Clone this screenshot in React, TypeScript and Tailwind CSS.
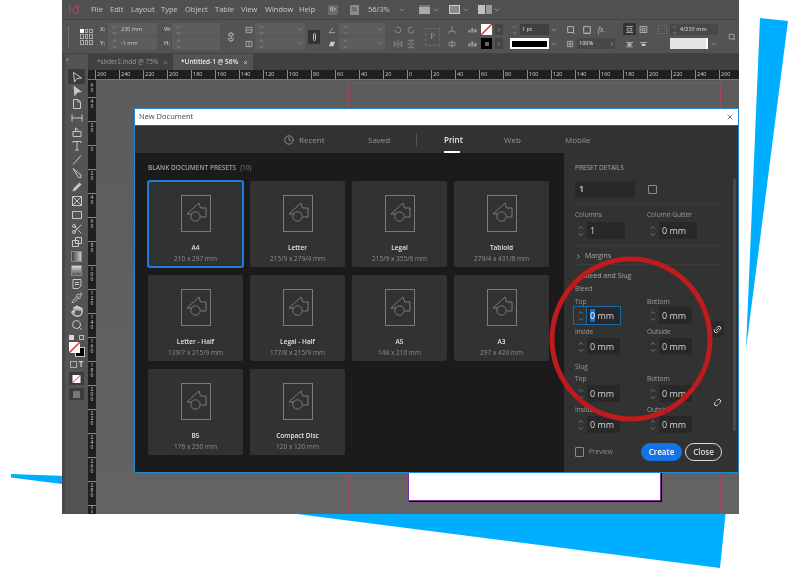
import React from 'react';
import { ChevronDown, ChevronRight, ChevronUp, Clock, Hand, Link2, Pipette, Scissors, Search, Unlink2, X } from 'lucide-react';

const Ico: React.FC<{ d: string; className?: string; fill?: boolean }> = ({ d, className = 'w-[12px] h-[12px]', fill }) => (
  <svg viewBox="0 0 24 24" className={`${className} shrink-0 text-[#c8c8c8]`} fill={fill ? 'currentColor' : 'none'} stroke="currentColor" strokeWidth={fill ? 0 : 2}>
    <path d={d} />
  </svg>
);

const NoneSwatch: React.FC<{ className: string }> = ({ className }) => (
  <svg viewBox="0 0 20 20" className={`${className} shrink-0`}>
    <rect width="20" height="20" fill="#fff" />
    <path d="M0 20L20 0" stroke="#e5283a" strokeWidth="2.5" />
  </svg>
);

const tools: React.ReactNode[] = [
  <Ico d="M5 3L21 14L12 15L7 22Z" />,
  <Ico fill d="M5 1L22 14L13 15L7 23Z" />,
  <Ico d="M5 3h9l5 5v13H5zM14 3v5h5" />,
  <Ico d="M2 5v14M22 5v14M2 12h20" />,
  <Ico d="M4 11h16v10H4zM9 11V4l6 4" />,
  <Ico d="M4 6V3h16v3M12 3v16M8 20h8" />,
  <Ico d="M4 21L20 3" />,
  <Ico d="M4 3l16 13v5h-5L4 3z" />,
  <Ico fill d="M3 21l2-6L17 3l4 4L9 19z" />,
  <Ico d="M3 3h18v18H3zM3 3l18 18M21 3L3 21" />,
  <Ico d="M3 5h18v14H3z" />,
  <Scissors className="w-[12px] h-[12px] text-[#c8c8c8]" strokeWidth={2} />,
  <Ico d="M9 3h12v12H9zM3 9h12v12H3z" />,
  <div className="w-[11px] h-[11px] bg-gradient-to-r from-[#444] to-[#ccc] border border-[#888]" />,
  <div className="w-[11px] h-[11px] bg-gradient-to-b from-[#ddd] to-[#555] border border-[#888]" />,
  <Ico d="M4 3h16v13l-5 5H4zM8 9h8M8 13h8" />,
  <Pipette className="w-[12px] h-[12px] text-[#c8c8c8]" strokeWidth={2} />,
  <Hand className="w-[12px] h-[12px] text-[#ddd]" strokeWidth={2.5} />,
  <Search className="w-[12px] h-[12px] text-[#c8c8c8]" strokeWidth={2} />,
];

const menu = [
  { label: 'File', cls: 'w-[19px]' },
  { label: 'Edit', cls: 'w-[21px]' },
  { label: 'Layout', cls: 'w-[30px]' },
  { label: 'Type', cls: 'w-[24px]' },
  { label: 'Object', cls: 'w-[30px]' },
  { label: 'Table', cls: 'w-[26px]' },
  { label: 'View', cls: 'w-[24px]' },
  { label: 'Window', cls: 'w-[34px]' },
  { label: 'Help', cls: 'w-[29px]' },
];

const hRuler = [260, 240, 220, 200, 180, 160, 140, 120, 100, 80, 60, 40, 20, 0, 20, 40, 60, 80, 100, 120, 140, 160, 180, 200, 220, 240, 260];
const vRuler = [40, 20, 0, 20, 40, 60, 80, 100, 120, 140, 160, 180, 200, 220, 240, 260, 280];

const presets = [
  { name: 'A4', size: '210 x 297 mm', active: true },
  { name: 'Letter', size: '215/9 x 279/4 mm' },
  { name: 'Legal', size: '215/9 x 355/6 mm' },
  { name: 'Tabloid', size: '279/4 x 431/8 mm' },
  { name: 'Letter - Half', size: '139/7 x 215/9 mm' },
  { name: 'Legal - Half', size: '177/8 x 215/9 mm' },
  { name: 'A5', size: '148 x 210 mm' },
  { name: 'A3', size: '297 x 420 mm' },
  { name: 'B5', size: '176 x 250 mm' },
  { name: 'Compact Disc', size: '120 x 120 mm' },
];

const Spin: React.FC = () => (
  <div className="w-[7px] flex flex-col items-center shrink-0 text-[#a8a8a8]">
    <ChevronUp className="w-[7px] h-[6px]" strokeWidth={2} />
    <ChevronDown className="w-[7px] h-[6px]" strokeWidth={2} />
  </div>
);

const CtlField: React.FC<{ text?: string; chevron?: boolean; className?: string }> = ({ text, chevron, className = '' }) => (
  <div className={`h-[13px] flex items-center bg-[#5d5d5d] pl-[3px] pr-[2px] gap-[3px] text-[5.5px] text-[#cfcfcf] ${className}`}>
    <Spin />
    <span className="flex-1 whitespace-nowrap">{text}</span>
    {chevron && <ChevronDown className="w-[7px] h-[7px] text-[#999]" strokeWidth={2.5} />}
  </div>
);

const Label: React.FC<{ children: React.ReactNode; className?: string }> = ({ children, className = '' }) => (
  <div className={`h-[8px] leading-[8px] text-[6.5px] text-[#9c9c9c] whitespace-nowrap ${className}`}>{children}</div>
);

const Stepper: React.FC<{ value: string; wide?: boolean; focused?: boolean }> = ({ value, wide, focused }) => (
  <div className={`flex items-center h-[17px] w-fit -ml-px pl-px ${focused ? 'outline outline-1 outline-[#1b6aa8]' : ''}`}>
    <div className={`w-[12px] flex flex-col items-center text-[#b4b4b4] ${focused ? 'border-r border-[#1b6aa8] h-full justify-center' : ''}`}>
      <ChevronUp className="w-[8px] h-[7px]" strokeWidth={1.75} />
      <ChevronDown className="w-[8px] h-[7px]" strokeWidth={1.75} />
    </div>
    <div className={`${wide ? 'w-[38px]' : 'w-[33px]'} h-full bg-[#282828] pl-[3px] flex items-center text-[9px] font-medium text-[#d4d4d4]`}>
      {focused ? (
        <span>
          <span className="bg-[#1d6fc0] text-white">0</span> mm
        </span>
      ) : (
        value
      )}
    </div>
  </div>
);

const Rule: React.FC<{ className: string }> = ({ className }) => <div className={`h-px bg-[#3c3c3c] w-[148px] ${className}`} />;

const FieldPair: React.FC<{ a: string; b: string; className?: string }> = ({ a, b, className = '' }) => (
  <div className={`flex ${className}`}>
    <Label className="w-[72px]">{a}</Label>
    <Label>{b}</Label>
  </div>
);

const PresetIcon: React.FC = () => (
  <svg viewBox="0 0 30 37" className="w-[30px] h-[37px]" fill="none" stroke="#7b7b7b" strokeWidth="1">
    <rect x="0.5" y="0.5" width="29" height="36" />
    <path d="M11 19H6L18 8l1.5 5H25v9h-5" />
    <circle cx="14.5" cy="21.5" r="4.7" />
  </svg>
);

const App: React.FC = () => {
  return (
    <div className="relative w-[800px] h-[572px] bg-white overflow-hidden" style={{ fontFamily: '"Open Sans", "Noto Sans", sans-serif' }}>
      <svg viewBox="0 0 800 572" className="absolute inset-0 w-[800px] h-[572px]">
        <path d="M760 18L788 21L746 349Z" fill="#00aeff" />
        <path d="M11 474L727 500L720 568L11 477.5Z" fill="#00aeff" />
      </svg>

      <div className="relative ml-[62px] w-[677px] h-[514px] bg-[#535353] flex flex-col overflow-hidden blur-[0.3px]">
        {/* menu bar */}
        <div className="h-[20px] shrink-0 flex items-center bg-[#505050] text-[7.5px] text-[#c8c8c8] border-b border-[#444]">
          <span className="ml-[6px] w-[23px] text-[13px] text-[#c23c72]">Id</span>
          {menu.map((m) => (
            <span key={m.label} className={m.cls}>{m.label}</span>
          ))}
          <span className="w-[10px] h-[10px] bg-[#6a6a6a] text-[5.5px] text-[#ccc] flex items-center justify-center">Br</span>
          <span className="ml-[12px] w-[9px] h-[10px] bg-[#8a8a8a] text-[5.5px] text-[#333] flex items-center justify-center">St</span>
          <span className="ml-[9px] w-[30px]">56/3%</span>
          <ChevronDown className="w-[8px] h-[8px] text-[#aaa]" strokeWidth={2} />
          <div className="ml-[13px] w-[11px] h-[9px] bg-[#aaa] border-t-2 border-[#777]" />
          <ChevronDown className="ml-[2px] w-[8px] h-[8px] text-[#aaa]" strokeWidth={2} />
          <div className="ml-[9px] w-[11px] h-[9px] bg-[#888] border border-[#ccc]" />
          <ChevronDown className="ml-[2px] w-[8px] h-[8px] text-[#aaa]" strokeWidth={2} />
          <div className="ml-[8px] w-[14px] h-[9px] flex gap-px">
            <div className="flex-1 bg-[#c0c0c0]" />
            <div className="flex-1 bg-[#999]" />
          </div>
          <ChevronDown className="ml-[1px] w-[8px] h-[8px] text-[#aaa]" strokeWidth={2} />
        </div>

        {/* control panel */}
        <div className="h-[34px] shrink-0 flex items-center bg-[#535353] border-b border-[#444] text-[6px] font-semibold text-[#c4c4c4]">
          <div className="ml-[6px] w-[2px] h-[20px] border-l border-dotted border-[#888]" />
          <div className="ml-[10px] w-[13px] h-[16px] grid grid-cols-3 gap-px">
            {Array.from({ length: 9 }).map((_, i) => (
              <div key={i} className={i === 0 ? 'bg-white' : 'border border-[#aaa]'} />
            ))}
          </div>
          <div className="ml-[7px] w-[57px] flex flex-col gap-px">
            <div className="flex items-center"><span className="w-[8px]">X:</span><CtlField text="230 mm" className="flex-1 font-normal" /></div>
            <div className="flex items-center"><span className="w-[8px]">Y:</span><CtlField text="-1 mm" className="flex-1 font-normal" /></div>
          </div>
          <div className="ml-[7px] w-[56px] flex flex-col gap-px">
            <div className="flex items-center"><span className="w-[8px]">W:</span><CtlField className="flex-1" /></div>
            <div className="flex items-center"><span className="w-[8px]">H:</span><CtlField className="flex-1" /></div>
          </div>
          <Link2 className="ml-[6px] w-[10px] h-[10px] text-[#ddd] rotate-90" strokeWidth={2} />
          <div className="ml-[9px] w-[60px] flex flex-col gap-px">
            <div className="flex items-center gap-[2px]"><Ico d="M3 4h18v16H3zM3 12h18" className="w-[8px] h-[8px]" /><CtlField chevron className="flex-1" /></div>
            <div className="flex items-center gap-[2px]"><Ico d="M3 4h18v16H3zM12 4v16" className="w-[8px] h-[8px]" /><CtlField chevron className="flex-1" /></div>
          </div>
          <div className="ml-[3px] w-[12px] h-[14px] bg-[#333] flex items-center justify-center">
            <div className="w-[3px] h-[8px] rounded-full border border-[#ccc]" />
          </div>
          <div className="ml-[7px] w-[58px] flex flex-col gap-px">
            <div className="flex items-center gap-[2px]"><Ico d="M3 20L15 6M3 20h18" className="w-[10px] h-[8px]" /><CtlField chevron className="flex-1" /></div>
            <div className="flex items-center gap-[2px]"><Ico fill d="M8 5h13l-5 14H3z" className="w-[10px] h-[8px]" /><CtlField chevron className="flex-1" /></div>
          </div>
          <div className="ml-[8px] w-[25px] grid grid-cols-2 gap-y-[4px] opacity-50">
            <Ico d="M5 12a7 7 0 1 0 7-7H9" className="w-[10px] h-[10px]" />
            <Ico d="M19 12a7 7 0 1 1-7-7h3" className="w-[10px] h-[10px]" />
            <Ico d="M12 3v18M3 6l6 6-6 6zM21 6l-6 6 6 6z" className="w-[10px] h-[10px]" />
            <Ico d="M3 12h18M6 3l6 6 6-6zM6 21l6-6 6 6z" className="w-[10px] h-[10px]" />
          </div>
          <div className="ml-[7px] w-[15px] h-[18px] flex items-center justify-center text-[9px] font-normal text-[#8f8f8f] border border-dashed border-[#6a6a6a]" style={{ fontFamily: '"Liberation Serif", serif' }}>P</div>
          <div className="ml-[7px] w-[31px] grid grid-cols-2 gap-y-[4px] gap-x-[7px] opacity-60">
            <Ico d="M12 3v8M5 21v-6h14v6M12 11v4" className="w-[10px] h-[10px]" />
            <Ico fill d="M2 12h5v6H2zM9 7h5v11H9zM16 10h6v8h-6z" className="w-[13px] h-[10px]" />
            <Ico d="M12 3v18M5 8h14v8H5z" className="w-[10px] h-[10px]" />
            <Ico fill d="M2 10h5v8H2zM9 6h5v12H9zM16 10h6v8h-6z" className="w-[13px] h-[10px]" />
          </div>
          <div className="ml-[3px] w-[22px] flex flex-col gap-[3px]">
            <div className="flex items-center gap-[3px]">
              <NoneSwatch className="w-[11px] h-[11px]" />
              <div className="w-[8px] h-[11px] bg-[#444] flex items-center justify-center"><ChevronRight className="w-[6px] h-[6px]" /></div>
            </div>
            <div className="flex items-center gap-[3px]">
              <div className="w-[11px] h-[11px] bg-black flex items-center justify-center"><div className="w-[4px] h-[4px] bg-[#666]" /></div>
              <div className="w-[8px] h-[11px] bg-[#444] flex items-center justify-center"><ChevronRight className="w-[6px] h-[6px]" /></div>
            </div>
          </div>
          <div className="ml-[7px] w-[48px] flex flex-col gap-[3px]">
            <div className="h-[11px] flex items-center gap-[1px]">
              <div className="w-[9px] flex justify-center"><Spin /></div>
              <div className="flex-1 h-full bg-[#3f3f3f] text-[5.5px] pl-[2px] flex items-center">1 pt</div>
              <ChevronDown className="w-[8px] h-[8px] text-[#aaa]" strokeWidth={2} />
            </div>
            <div className="h-[11px] flex items-center gap-[1px]">
              <div className="flex-1 h-full bg-white p-[2px] flex items-center"><div className="w-full h-[6px] bg-black" /></div>
              <ChevronDown className="w-[8px] h-[8px] text-[#aaa]" strokeWidth={2} />
            </div>
          </div>
          <div className="ml-[8px] w-[49px] flex flex-col gap-[3px]">
            <div className="h-[11px] flex items-center gap-[6px]">
              <Ico d="M4 4h14v14H4zM18 20h3" className="w-[10px] h-[10px]" />
              <Ico d="M4 4h16v16H4zM7 20h10" className="w-[10px] h-[10px]" />
              <span className="text-[7.5px] italic font-normal" style={{ fontFamily: '"Liberation Serif", serif' }}>fx.</span>
            </div>
            <div className="h-[11px] flex items-center gap-[3px]">
              <Ico d="M4 4h16v16H4zM9 9h6v6H9z" className="w-[8px] h-[8px]" />
              <div className="flex-1 h-full bg-[#484848] text-[5.5px] pl-[2px] flex items-center justify-between">100%<ChevronRight className="w-[6px] h-[6px]" /></div>
            </div>
          </div>
          <div className="ml-[8px] w-[27px] grid grid-cols-2 gap-y-[3px] gap-x-[3px]">
            <div className="w-[13px] h-[12px] bg-[#333] flex items-center justify-center"><Ico d="M3 4h18M6 9h12v7H6zM3 20h18" className="w-[9px] h-[9px]" /></div>
            <div className="w-[11px] h-[12px] flex items-center justify-center"><Ico d="M3 4h18v16H3zM8 9h8v7H8z" className="w-[9px] h-[9px]" /></div>
            <div className="w-[13px] h-[12px] flex items-center justify-center"><Ico fill d="M3 5h18v2H3zM7 9h10v6H7zM3 17h18v2H3z" className="w-[9px] h-[9px]" /></div>
            <div className="w-[11px] h-[12px] flex items-center justify-center"><Ico fill d="M3 5h18v2H3zM7 10h10v6H7z" className="w-[9px] h-[9px]" /></div>
          </div>
          <div className="ml-[8px] w-[60px] flex flex-col gap-[3px]">
            <div className="h-[11px] flex items-center gap-[3px]">
              <div className="w-[9px] h-[9px] border border-dotted border-[#2f86d8]" />
              <div className="flex-1 h-full bg-[#484848] text-[5.5px] pl-[1px] flex items-center gap-[2px]"><Spin />4/233 mm</div>
            </div>
            <div className="h-[11px] flex items-center pl-[12px] gap-[2px]">
              <div className="flex-1 h-full bg-[#e4e4e4] border-r-2 border-white" />
              <ChevronDown className="w-[8px] h-[8px] text-[#aaa]" strokeWidth={2} />
            </div>
          </div>
          <Ico d="M4 4h14v14H4zM18 20h3" className="ml-[10px] w-[8px] h-[8px]" />
        </div>

        {/* tools + document area */}
        <div className="flex-1 flex min-h-0">
          <div className="w-[26px] shrink-0 border-l-[3px] border-[#474747] flex flex-col items-center bg-[#535353]">
            <div className="h-[16px] w-full shrink-0 text-[6px] leading-[10px] text-[#bbb] pl-[1px]">»</div>
            <div className="relative flex flex-col items-center">
              <div className="absolute top-[-1px] left-[-3px] w-[17px] h-[15px] bg-[#3a3a3a]" />
              {tools.map((t, i) => (
                <div key={i} className="relative h-[13.8px] flex items-center justify-center">{t}</div>
              ))}
            </div>
            <div className="mt-[3px] flex items-center gap-[5px]">
              <div className="w-[5px] h-[5px] bg-[#e8d0d8]" />
              <div className="w-[5px] h-[5px] border border-[#bbb]" />
            </div>
            <div className="relative mt-[2px] w-[16px] h-[15px]">
              <div className="absolute right-0 bottom-0 w-[10px] h-[10px] bg-black border border-[#ccc]" />
              <NoneSwatch className="absolute left-0 top-0 w-[11px] h-[11px]" />
            </div>
            <div className="mt-[3px] flex items-center gap-[2px]">
              <div className="w-[7px] h-[7px] border border-[#aaa]" />
              <span className="text-[8px] leading-[8px] font-bold text-[#ccc]">T</span>
            </div>
            <div className="mt-[4px] w-[15px] h-[13px] bg-[#3c3c3c] flex items-center justify-center">
              <NoneSwatch className="w-[9px] h-[8px]" />
            </div>
            <div className="mt-[3px] w-[15px] h-[12px] bg-[#3c3c3c] flex items-center justify-center">
              <div className="w-[7px] h-[7px] bg-[#777]" />
            </div>
          </div>

          <div className="flex-1 flex flex-col min-w-0">
            {/* tabs */}
            <div className="h-[16px] shrink-0 flex bg-[#404040] text-[6.5px] text-[#9c9c9c]">
              <div className="w-[85px] flex items-center gap-[5px] pl-[9px] whitespace-nowrap">
                *slider2.indd @ 75%<X className="w-[5px] h-[5px]" strokeWidth={3} />
              </div>
              <div className="w-[80px] flex items-center gap-[5px] pl-[8px] bg-[#535353] text-[#ececec] font-semibold whitespace-nowrap">
                *Untitled-1 @ 56%<X className="w-[5px] h-[5px]" strokeWidth={3} />
              </div>
            </div>

            {/* horizontal ruler */}
            <div className="h-[10px] shrink-0 flex bg-[#1f1f1f] border-b border-[#777] pl-[7px] overflow-hidden">
              {hRuler.map((n, i) => (
                <div key={i} className="w-[24px] shrink-0 border-l border-[#888] pl-[1px] text-[5.5px] leading-[8px] text-[#d0d0d0]">{n}</div>
              ))}
            </div>

            <div className="flex-1 flex min-h-0">
              {/* vertical ruler */}
              <div className="w-[8px] shrink-0 bg-[#1f1f1f] flex flex-col overflow-hidden">
                <div className="h-[17px] shrink-0 flex flex-col items-center pt-[3px] text-[5px] leading-[5px] text-[#d0d0d0]">
                  <span>6</span>
                  <span>0</span>
                </div>
                {vRuler.map((n, i) => (
                  <div key={i} className="h-[24px] shrink-0 border-t border-[#888] flex flex-col items-center pt-[1px] text-[5px] leading-[5px] text-[#d0d0d0]">
                    {String(n).split('').map((c, j) => (
                      <span key={j}>{c}</span>
                    ))}
                  </div>
                ))}
                <div className="h-[9px] shrink-0 border-t border-[#888] flex flex-col items-center text-[4px] leading-[4px] text-[#d0d0d0]">
                  <span>3</span>
                  <span>0</span>
                </div>
              </div>

              {/* pasteboard: the page sits on a free canvas */}
              <div className="relative flex-1 bg-gradient-to-b from-[#5c5c5c] to-[#636363]">
                <div className="absolute left-[252px] top-[3px] w-[373px] h-[440px] border border-[#a04a62]" />
                <div className="absolute left-[312px] top-[380px] w-[253px] h-[41px] bg-white border border-[#7b2d9e] shadow-[1px_1px_0_#000]" />
              </div>
            </div>
          </div>
        </div>
      </div>

      {/* New Document dialog */}
      <div className="absolute left-[134px] top-[108px] w-[605px] h-[365px] flex flex-col border border-[#2a86cc] bg-[#1b1b1b] blur-[0.25px]">
        <div className="h-[17px] shrink-0 bg-white flex items-center justify-between pl-[4px] pr-[4px] text-[7.5px] text-[#444] border-b border-[#555]">
          New Document
          <X className="w-[8px] h-[8px] text-[#333]" strokeWidth={2} />
        </div>
        <div className="h-[27px] shrink-0 bg-[#323232] flex items-center text-[8px] text-[#969696]">
          <Clock className="ml-[149px] w-[10px] h-[10px] text-[#a0a0a0]" strokeWidth={2} />
          <span className="ml-[5px] w-[69px]">Recent</span>
          <span className="w-[48px]">Saved</span>
          <div className="w-px h-[14px] bg-[#555]" />
          <div className="ml-[27px] w-[60px] h-full relative flex items-center font-semibold text-[#e8e8e8]">
            Print
            <div className="absolute left-0 bottom-0 w-[16px] h-[2px] bg-white" />
          </div>
          <span className="w-[61px]">Web</span>
          <span>Mobile</span>
        </div>
        <div className="flex-1 flex min-h-0">
          <div className="w-[429px] shrink-0 pl-[13px] pt-[11px]">
            <div className="h-[8px] leading-[8px] text-[6.5px] font-semibold text-[#a0a0a0] whitespace-nowrap">
              BLANK DOCUMENT PRESETS<span className="ml-[4px] font-normal text-[#808080]">(10)</span>
            </div>
            <div className="mt-[9px] grid grid-cols-[repeat(4,95px)] auto-rows-[86px] gap-x-[7px] gap-y-[8px]">
              {presets.map((p) => (
                <div key={p.name} className={`rounded-[2px] bg-[#323232] flex flex-col items-center pt-[14px] ${p.active ? 'outline-2 -outline-offset-1 outline-[#1d7ce0]' : ''}`}>
                  <PresetIcon />
                  <div className="mt-[11px] h-[9px] leading-[9px] text-[6.5px] font-semibold text-[#e2e2e2]">{p.name}</div>
                  <div className="mt-[2px] h-[9px] leading-[9px] text-[6.5px] text-[#8e8e8e]">{p.size}</div>
                </div>
              ))}
            </div>
          </div>

          <div className="relative flex-1 bg-[#323232] pl-[11px] flex flex-col">
            <div className="mt-[11px] h-[8px] leading-[8px] text-[6.5px] text-[#a8a8a8]">PRESET DETAILS</div>
            <div className="mt-[9px] flex items-center h-[16px]">
              <div className="w-[60px] h-full bg-[#282828] pl-[4px] flex items-center text-[9px] font-semibold text-[#d0d0d0]">1</div>
              <div className="ml-[13px] w-[9px] h-[9px] border border-[#8a8a8a] rounded-[1px]" />
            </div>
            <Rule className="mt-[7px]" />
            <FieldPair a="Columns" b="Column Gutter" className="mt-[6px]" />
            <div className="mt-[3px] flex">
              <div className="w-[72px]"><Stepper value="1" wide /></div>
              <Stepper value="0 mm" wide />
            </div>
            <Rule className="mt-[6px]" />
            <div className="mt-[6px] h-[8px] flex items-center gap-[3px] text-[7px] text-[#a8a8a8]">
              <ChevronRight className="w-[7px] h-[7px]" strokeWidth={3} />Margins
            </div>
            <Rule className="mt-[4px]" />
            <div className="mt-[7px] h-[8px] pl-[8px] leading-[8px] text-[7px] text-[#a8a8a8]">Bleed and Slug</div>
            <Label className="mt-[5px]">Bleed</Label>

            <div className="flex">
              <div className="w-[135px]">
                <FieldPair a="Top" b="Bottom" className="mt-[5px]" />
                <div className="mt-px flex">
                  <div className="w-[72px]"><Stepper value="0 mm" focused /></div>
                  <Stepper value="0 mm" />
                </div>
                <FieldPair a="Inside" b="Outside" className="mt-[4px]" />
                <div className="mt-[2px] flex">
                  <div className="w-[72px]"><Stepper value="0 mm" /></div>
                  <Stepper value="0 mm" />
                </div>
              </div>
              <div className="mt-[28px] w-[14px] h-[16px] bg-[#2a2a2a] flex items-center justify-center">
                <Link2 className="w-[9px] h-[9px] text-[#ddd] -rotate-45" strokeWidth={2.5} />
              </div>
            </div>

            <Label className="mt-[8px]">Slug</Label>
            <div className="flex">
              <div className="w-[135px]">
                <FieldPair a="Top" b="Bottom" className="mt-[4px]" />
                <div className="mt-[2px] flex">
                  <div className="w-[72px]"><Stepper value="0 mm" /></div>
                  <Stepper value="0 mm" />
                </div>
                <FieldPair a="Inside" b="Outside" className="mt-[4px]" />
                <div className="mt-[2px] flex">
                  <div className="w-[72px]"><Stepper value="0 mm" /></div>
                  <Stepper value="0 mm" />
                </div>
              </div>
              <div className="mt-[23px] w-[14px] h-[16px] flex items-center justify-center">
                <Unlink2 className="w-[9px] h-[9px] text-[#ddd] -rotate-45" strokeWidth={2.5} />
              </div>
            </div>

            <div className="mt-[10px] flex items-center h-[18px]">
              <div className="w-[9px] h-[10px] border border-[#8a8a8a] rounded-[1px]" />
              <span className="ml-[5px] w-[52px] text-[6.5px] text-[#8e8e8e]">Preview</span>
              <div className="w-[41px] h-[18px] rounded-full bg-[#1473e6] flex items-center justify-center text-[8px] font-semibold text-white">Create</div>
              <div className="ml-[3px] w-[37px] h-[18px] rounded-full border border-[#d8d8d8] flex items-center justify-center text-[8px] font-semibold text-[#d8d8d8]">Close</div>
            </div>

            <div className="absolute right-[2px] top-[26px] w-[3px] h-[252px] bg-[#4a4a4a]" />
          </div>
        </div>
      </div>

      {/* red marker circle drawn over the dialog */}
      <svg viewBox="0 0 800 572" className="absolute inset-0 w-[800px] h-[572px] pointer-events-none" fill="none">
        <ellipse cx="631" cy="339" rx="79" ry="80" stroke="#bf1a1e" strokeWidth="5" />
      </svg>
    </div>
  );
};

export default App;
